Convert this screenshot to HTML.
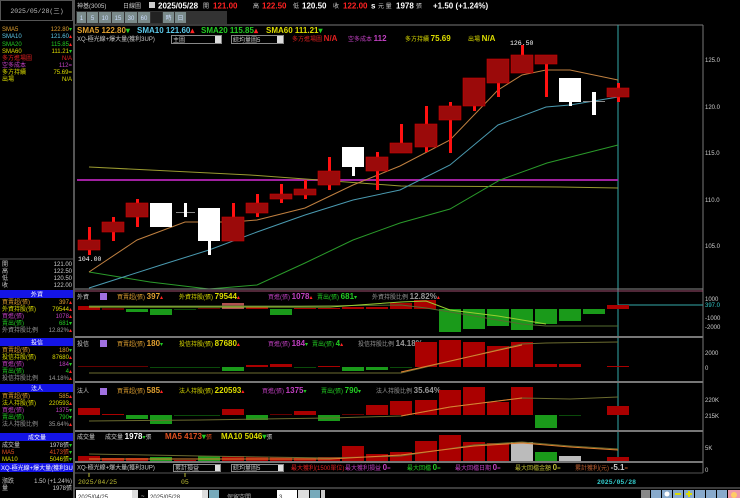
<!DOCTYPE html>
<html><head><meta charset="utf-8"><style>
html,body{margin:0;padding:0;background:#000;width:740px;height:498px;overflow:hidden}
svg{display:block}
text{font-family:"Liberation Sans","Noto Sans CJK TC",sans-serif;font-size:6px}
.b{font-weight:bold;font-size:8px}
.m{font-family:"Liberation Mono","Noto Sans CJK TC",monospace;font-size:6.5px}
</style></head><body>
<svg width="740" height="498" viewBox="0 0 740 498" xmlns="http://www.w3.org/2000/svg">
<rect width="740" height="498" fill="#000"/>
<rect x="0.5" y="0.5" width="72" height="20" fill="#000" stroke="#555"/>
<text x="37" y="13" fill="#bbb" text-anchor="middle" class="m" font-size="6.5">2025/05/28(三)</text>
<line x1="74" y1="0" x2="74" y2="498" stroke="#555" stroke-width="2"/>
<g class="m">
<text x="2" y="31" fill="#e0a030">SMA5</text><text x="72" y="31" fill="#e0a030" text-anchor="end">122.80<tspan fill="#2c2">▾</tspan></text>
<text x="2" y="38" fill="#5cc8e8">SMA10</text><text x="72" y="38" fill="#5cc8e8" text-anchor="end">121.60<tspan fill="#f22">▴</tspan></text>
<text x="2" y="46" fill="#2c2">SMA20</text><text x="72" y="46" fill="#2c2" text-anchor="end">115.85<tspan fill="#f22">▴</tspan></text>
<text x="2" y="53" fill="#dd0">SMA60</text><text x="72" y="53" fill="#dd0" text-anchor="end">111.21<tspan fill="#2c2">▾</tspan></text>
<text x="2" y="60" fill="#e02020">多方進場圖</text><text x="72" y="60" fill="#e02020" text-anchor="end">N/A</text>
<text x="2" y="67" fill="#c040c0">空多成本</text><text x="72" y="67" fill="#c040c0" text-anchor="end">112=</text>
<text x="2" y="74" fill="#dd0">多方持續</text><text x="72" y="74" fill="#dd0" text-anchor="end">75.69=</text>
<text x="2" y="81" fill="#dd0">出場</text><text x="72" y="81" fill="#dd0" text-anchor="end">N/A</text>
</g>
<line x1="0" y1="259" x2="74" y2="259" stroke="#555"/>
<g class="m" fill="#ccc">
<text x="2" y="266">開</text><text x="72" y="266" text-anchor="end">121.00</text>
<text x="2" y="273">高</text><text x="72" y="273" text-anchor="end">122.50</text>
<text x="2" y="280">低</text><text x="72" y="280" text-anchor="end">120.50</text>
<text x="2" y="287">收</text><text x="72" y="287" text-anchor="end">122.00</text>
</g>
<g class="m">
<rect x="0" y="290" width="73" height="8" fill="#1414e6"/><text x="37" y="296.5" fill="#fff" text-anchor="middle">外資</text>
<text x="2" y="304" fill="#e0a030">買賣超(張)</text><text x="72" y="304" fill="#e0a030" text-anchor="end">397<tspan fill="#f22">▴</tspan></text>
<text x="2" y="311" fill="#dd0">外資持股(張)</text><text x="72" y="311" fill="#dd0" text-anchor="end">79544<tspan fill="#f22">▴</tspan></text>
<text x="2" y="318" fill="#c040c0">買進(張)</text><text x="72" y="318" fill="#c040c0" text-anchor="end">1078<tspan fill="#f22">▴</tspan></text>
<text x="2" y="325" fill="#2c2">賣出(張)</text><text x="72" y="325" fill="#2c2" text-anchor="end">681▾</text>
<text x="2" y="332" fill="#999">外資持股比例</text><text x="72" y="332" fill="#999" text-anchor="end">12.82%<tspan fill="#f22">▴</tspan></text>
<rect x="0" y="338" width="73" height="8" fill="#1414e6"/><text x="37" y="344.5" fill="#fff" text-anchor="middle">投信</text>
<text x="2" y="352" fill="#e0a030">買賣超(張)</text><text x="72" y="352" fill="#e0a030" text-anchor="end">180<tspan fill="#2c2">▾</tspan></text>
<text x="2" y="359" fill="#dd0">投信持股(張)</text><text x="72" y="359" fill="#dd0" text-anchor="end">87680<tspan fill="#f22">▴</tspan></text>
<text x="2" y="366" fill="#c040c0">買進(張)</text><text x="72" y="366" fill="#c040c0" text-anchor="end">184<tspan fill="#2c2">▾</tspan></text>
<text x="2" y="373" fill="#2c2">賣出(張)</text><text x="72" y="373" fill="#2c2" text-anchor="end">4<tspan fill="#f22">▴</tspan></text>
<text x="2" y="380" fill="#999">投信持股比例</text><text x="72" y="380" fill="#999" text-anchor="end">14.18%<tspan fill="#f22">▴</tspan></text>
<rect x="0" y="384" width="73" height="8" fill="#1414e6"/><text x="37" y="390.5" fill="#fff" text-anchor="middle">法人</text>
<text x="2" y="398" fill="#e0a030">買賣超(張)</text><text x="72" y="398" fill="#e0a030" text-anchor="end">585<tspan fill="#f22">▴</tspan></text>
<text x="2" y="405" fill="#dd0">法人持股(張)</text><text x="72" y="405" fill="#dd0" text-anchor="end">220593<tspan fill="#f22">▴</tspan></text>
<text x="2" y="412" fill="#c040c0">買進(張)</text><text x="72" y="412" fill="#c040c0" text-anchor="end">1375<tspan fill="#2c2">▾</tspan></text>
<text x="2" y="419" fill="#2c2">賣出(張)</text><text x="72" y="419" fill="#2c2" text-anchor="end">790▾</text>
<text x="2" y="426" fill="#999">法人持股比例</text><text x="72" y="426" fill="#999" text-anchor="end">35.64%<tspan fill="#f22">▴</tspan></text>
<rect x="0" y="433" width="73" height="8" fill="#1414e6"/><text x="37" y="439.5" fill="#fff" text-anchor="middle">成交量</text>
<text x="2" y="447" fill="#ccc">成交量</text><text x="72" y="447" fill="#ccc" text-anchor="end">1978張<tspan fill="#2c2">▾</tspan></text>
<text x="2" y="454" fill="#e05020">MA5</text><text x="72" y="454" fill="#e05020" text-anchor="end">4173張<tspan fill="#2c2">▾</tspan></text>
<text x="2" y="461" fill="#dd0">MA10</text><text x="72" y="461" fill="#dd0" text-anchor="end">5046張<tspan fill="#2c2">▾</tspan></text>
<rect x="0" y="463" width="73" height="9" fill="#1414e6"/><text x="1" y="470" fill="#fff">XQ-極光線+爆大量(獲利3U</text>
<text x="2" y="483" fill="#ccc">漲跌</text><text x="72" y="483" fill="#ccc" text-anchor="end">1.50 (+1.24%)</text>
<text x="2" y="490" fill="#ccc">量</text><text x="72" y="490" fill="#ccc" text-anchor="end">1978張</text>
</g>

<text x="77" y="8" fill="#ccc">神基(3005)</text>
<text x="123" y="8" fill="#ccc">日線圖</text>
<rect x="149" y="2" width="6" height="6" fill="#ccc"/>
<text x="158" y="8.5" fill="#fff" class="b" font-size="8.5">2025/05/28</text>
<text x="203" y="8" fill="#ccc">開</text><text x="213" y="8.5" fill="#f22" class="b">121.00</text>
<text x="253" y="8" fill="#ccc">高</text><text x="262" y="8.5" fill="#f22" class="b">122.50</text>
<text x="293" y="8" fill="#ccc">低</text><text x="302" y="8.5" fill="#fff" class="b">120.50</text>
<text x="333" y="8" fill="#ccc">收</text><text x="343" y="8.5" fill="#f22" class="b">122.00</text>
<text x="371" y="8.5" fill="#fff" class="b">s</text><text x="378" y="8" fill="#ccc">元  量</text>
<text x="396" y="8.5" fill="#fff" class="b">1978</text><text x="416" y="8" fill="#ccc">張</text>
<text x="433" y="8.5" fill="#fff" class="b">+1.50 (+1.24%)</text>
<g font-size="6.5">
<rect x="76" y="11" width="151" height="13" fill="#333"/>
<rect x="77" y="12" width="9" height="11" fill="#7a8a8a"/><text x="81.5" y="20" text-anchor="middle" fill="#cdf" font-size="7">1</text>
<rect x="87" y="12" width="11" height="11" fill="#7a8a8a"/><text x="92.5" y="20" text-anchor="middle" fill="#cdf" font-size="7">5</text>
<rect x="99" y="12" width="12" height="11" fill="#7a8a8a"/><text x="105" y="20" text-anchor="middle" fill="#cdf" font-size="7">10</text>
<rect x="112" y="12" width="12" height="11" fill="#7a8a8a"/><text x="118" y="20" text-anchor="middle" fill="#cdf" font-size="7">15</text>
<rect x="125" y="12" width="12" height="11" fill="#7a8a8a"/><text x="131" y="20" text-anchor="middle" fill="#cdf" font-size="7">30</text>
<rect x="138" y="12" width="12" height="11" fill="#7a8a8a"/><text x="144" y="20" text-anchor="middle" fill="#cdf" font-size="7">60</text>
<rect x="151" y="12" width="11" height="11" fill="#222"/>
<rect x="163" y="12" width="11" height="11" fill="#7a8a8a"/><text x="168.5" y="20" text-anchor="middle" fill="#cdf">時</text>
<rect x="175" y="12" width="11" height="11" fill="#7a8a8a"/><text x="180.5" y="20" text-anchor="middle" fill="#cdf">日</text>
</g>
<line x1="75" y1="25" x2="703" y2="25" stroke="#777"/>
<text x="77" y="33" fill="#e0a030" class="b">SMA5 122.80<tspan fill="#2c2">▾</tspan></text>
<text x="137" y="33" fill="#5cc8e8" class="b">SMA10 121.60<tspan fill="#f22">▴</tspan></text>
<text x="201" y="33" fill="#2c2" class="b">SMA20 115.85<tspan fill="#f22">▴</tspan></text>
<text x="266" y="33" fill="#dd0" class="b">SMA60 111.21<tspan fill="#2c2">▾</tspan></text>
<text x="77" y="41" fill="#ccc">XQ-極光線+爆大量(獲利3UP)</text>
<rect x="171.5" y="35.5" width="50" height="8" fill="#000" stroke="#888"/><text x="173" y="42" fill="#ccc" font-size="5.5">主圖</text><rect x="215" y="36" width="6" height="7" fill="#ddd"/>
<rect x="231.5" y="35.5" width="52" height="8" fill="#000" stroke="#888"/><text x="233" y="42" fill="#ccc" font-size="5.5">綜均量圖5</text><rect x="277" y="36" width="6" height="7" fill="#ddd"/>
<text x="292" y="41" fill="#e02020">多方進場圖 <tspan class="b" font-size="7">N/A</tspan></text>
<text x="348" y="41" fill="#c040c0">空多成本 <tspan class="b" font-size="7">112</tspan></text>
<text x="405" y="41" fill="#dd0">多方持續 <tspan class="b" font-size="7">75.69</tspan></text>
<text x="468" y="41" fill="#dd0">出場 <tspan class="b" font-size="7">N/A</tspan></text>

<line x1="703" y1="25" x2="703" y2="473" stroke="#777"/>
<line x1="618" y1="25" x2="618" y2="462" stroke="#3aa"/>
<g fill="#ccc" class="m">
<text x="705" y="62">125.0</text><text x="705" y="109">120.0</text><text x="705" y="155">115.0</text><text x="705" y="202">110.0</text><text x="705" y="248">105.0</text>
<text x="705" y="301">1000</text><text x="705" y="307" fill="#3cc">397.0</text><text x="705" y="320">-1000</text><text x="705" y="329">-2000</text>
<text x="705" y="355">2000</text><text x="705" y="370">0</text>
<text x="705" y="402">220K</text><text x="705" y="418">215K</text>
<text x="705" y="450">5K</text><text x="705" y="472">0</text>
</g>
<line x1="77" y1="180" x2="618" y2="180" stroke="#a020a0" stroke-width="2"/>
<polyline fill="none" stroke="#9a9a30" points="89,167 250,175 401,186 560,187 618,188"/>
<polyline fill="none" stroke="#2a9a2a" points="89,272 150,282 209,289 257,285 305,263 353,240 400,223 450,209 500,180 547,163 618,145"/>
<polyline fill="none" stroke="#4a9ab0" points="89,288 161,265 209,250 257,232 305,215 353,200 400,190 450,165 498,125 546,107 570,105 618,97"/>
<polyline fill="none" stroke="#c08040" points="89,272 137,240 185,222 233,222 257,220 305,208 353,185 400,166 450,140 498,90 522,75 546,70 570,70 618,80"/>
<g fill="#f11">
<rect x="88" y="227" width="3" height="28"/><rect x="112" y="217" width="3" height="24"/><rect x="136" y="199" width="3" height="28"/>
<rect x="232" y="203" width="3" height="38"/><rect x="256" y="194" width="3" height="23"/><rect x="280" y="184" width="3" height="19"/>
<rect x="304" y="180" width="3" height="19"/><rect x="328" y="157" width="3" height="33"/><rect x="376" y="152" width="3" height="38"/>
<rect x="400" y="124" width="3" height="29"/><rect x="425" y="106" width="3" height="46"/><rect x="449" y="102" width="3" height="51"/>
<rect x="473" y="78" width="3" height="33"/><rect x="497" y="59" width="3" height="38"/><rect x="521" y="45" width="3" height="20"/>
<rect x="545" y="55" width="3" height="42"/><rect x="617" y="83" width="3" height="19"/>
</g>
<g fill="#9b0a0a" stroke="#c00" stroke-width="0.6">
<rect x="78" y="240" width="22" height="10"/><rect x="102" y="222" width="22" height="10"/><rect x="126" y="203" width="22" height="14"/>
<rect x="222" y="217" width="22" height="24"/><rect x="246" y="203" width="22" height="10"/><rect x="270" y="194" width="22" height="5"/>
<rect x="294" y="189" width="22" height="6"/><rect x="318" y="171" width="22" height="14"/><rect x="366" y="157" width="22" height="14"/>
<rect x="390" y="143" width="22" height="10"/><rect x="415" y="124" width="22" height="23"/><rect x="439" y="106" width="22" height="14"/>
<rect x="463" y="78" width="22" height="28"/><rect x="487" y="59" width="22" height="24"/><rect x="511" y="55" width="22" height="18"/>
<rect x="535" y="55" width="22" height="9"/><rect x="607" y="88" width="22" height="9"/>
</g>
<g fill="#fff">
<rect x="150" y="203" width="22" height="24"/>
<rect x="176" y="212" width="19" height="1" fill="#888"/><rect x="184" y="203" width="3" height="14"/>
<rect x="198" y="208" width="22" height="33"/><rect x="208" y="241" width="3" height="14"/>
<rect x="342" y="147" width="22" height="20"/><rect x="352" y="167" width="3" height="9"/>
<rect x="559" y="78" width="22" height="24"/><rect x="569" y="102" width="3" height="4"/>
<rect x="583" y="101" width="22" height="1" fill="#888"/><rect x="592" y="92" width="4" height="23"/>
</g>
<text x="510" y="45" fill="#fff" class="m">126.50</text>
<text x="78" y="261" fill="#fff" class="m">104.00</text>
<line x1="75" y1="289" x2="703" y2="289" stroke="#888"/>
<line x1="75" y1="291" x2="703" y2="291" stroke="#a05070"/>

<rect x="100" y="293" width="7" height="7" fill="#a070e0"/>
<text x="77" y="299" fill="#ccc">外資</text>
<text x="117" y="299" fill="#e0a030">買賣超(張) <tspan class="b" font-size="7.5">397</tspan><tspan fill="#f22">▴</tspan></text>
<text x="179" y="299" fill="#dd0">外資持股(張) <tspan class="b" font-size="7.5">79544</tspan><tspan fill="#f22">▴</tspan></text>
<text x="268" y="299" fill="#c040c0">買進(張) <tspan class="b" font-size="7.5">1078</tspan><tspan fill="#f22">▴</tspan></text>
<text x="317" y="299" fill="#2c2">賣出(張) <tspan class="b" font-size="7.5">681</tspan>▾</text>
<text x="372" y="299" fill="#999">外資持股比例 <tspan class="b" font-size="7.5">12.82%</tspan><tspan fill="#f22">▴</tspan></text>
<line x1="618" y1="305" x2="703" y2="305" stroke="#3aa"/>
<g>
<rect x="78" y="306" width="22" height="4" fill="#a00"/><rect x="102" y="308" width="22" height="2" fill="#600"/>
<rect x="126" y="309" width="22" height="3" fill="#1a9a1a"/><rect x="150" y="309" width="22" height="6" fill="#1a9a1a"/>
<rect x="174" y="309" width="22" height="1" fill="#0a4a0a"/><rect x="198" y="308" width="22" height="1" fill="#600"/>
<rect x="222" y="303" width="22" height="6" fill="#b05050"/><rect x="246" y="306" width="22" height="3" fill="#a00"/>
<rect x="270" y="309" width="22" height="6" fill="#1a9a1a"/><rect x="294" y="308" width="22" height="1" fill="#a00"/>
<rect x="318" y="308" width="22" height="1" fill="#a00"/><rect x="342" y="307" width="22" height="2" fill="#a00"/>
<rect x="366" y="307" width="22" height="2" fill="#a00"/><rect x="390" y="303" width="22" height="6" fill="#a00"/>
<rect x="414" y="300" width="22" height="9" fill="#a00"/>
<rect x="439" y="309" width="22" height="23" fill="#1a9a1a"/><rect x="463" y="309" width="22" height="20" fill="#1a9a1a"/>
<rect x="487" y="309" width="22" height="17" fill="#1a9a1a"/><rect x="511" y="309" width="22" height="21" fill="#1a9a1a"/>
<rect x="535" y="309" width="22" height="15" fill="#1a9a1a"/><rect x="559" y="309" width="22" height="12" fill="#1a9a1a"/>
<rect x="583" y="309" width="22" height="5" fill="#1a9a1a"/><rect x="607" y="305" width="22" height="4" fill="#a00"/>
</g>
<polyline fill="none" stroke="#556b2f" points="89,306 300,306 401,305 426,308 474,316 522,324 546,326 618,326"/>
<polyline fill="none" stroke="#9acd32" points="89,307 330,307 401,302 426,301 450,310 498,316 546,324"/>
<line x1="75" y1="337" x2="703" y2="337" stroke="#777" stroke-width="2"/>

<rect x="100" y="340" width="7" height="7" fill="#a070e0"/>
<text x="77" y="346" fill="#ccc">投信</text>
<text x="117" y="346" fill="#e0a030">買賣超(張) <tspan class="b" font-size="7.5">180</tspan><tspan fill="#2c2">▾</tspan></text>
<text x="179" y="346" fill="#dd0">投信持股(張) <tspan class="b" font-size="7.5">87680</tspan><tspan fill="#f22">▴</tspan></text>
<text x="268" y="346" fill="#c040c0">買進(張) <tspan class="b" font-size="7.5">184</tspan><tspan fill="#2c2">▾</tspan></text>
<text x="312" y="346" fill="#2c2">賣出(張) <tspan class="b" font-size="7.5">4</tspan><tspan fill="#f22">▴</tspan></text>
<text x="358" y="346" fill="#999">投信持股比例 <tspan class="b" font-size="7.5">14.18%</tspan><tspan fill="#f22">▴</tspan></text>
<g>
<rect x="78" y="366" width="70" height="1" fill="#600"/><rect x="150" y="367" width="70" height="1" fill="#0a4a0a"/>
<rect x="222" y="367" width="22" height="4" fill="#1a9a1a"/><rect x="246" y="365" width="22" height="2" fill="#a00"/>
<rect x="270" y="364" width="22" height="3" fill="#a00"/><rect x="294" y="367" width="22" height="1" fill="#0a4a0a"/>
<rect x="318" y="366" width="22" height="1" fill="#a00"/><rect x="342" y="367" width="22" height="4" fill="#1a9a1a"/>
<rect x="366" y="367" width="22" height="3" fill="#1a9a1a"/><rect x="390" y="367" width="22" height="1" fill="#0a4a0a"/>
<rect x="415" y="342" width="22" height="25" fill="#a00"/><rect x="439" y="340" width="22" height="27" fill="#a00"/>
<rect x="463" y="342" width="22" height="25" fill="#a00"/><rect x="487" y="346" width="22" height="21" fill="#a00"/>
<rect x="511" y="342" width="22" height="25" fill="#a00"/><rect x="535" y="364" width="22" height="3" fill="#a00"/>
<rect x="559" y="364" width="22" height="3" fill="#a00"/><rect x="607" y="366" width="22" height="1" fill="#a00"/>
</g>
<polyline fill="none" stroke="#6b6b2f" points="89,373 401,373 522,344 546,343 618,342"/>
<polyline fill="none" stroke="#e08030" points="401,372 522,345"/>
<line x1="75" y1="382" x2="703" y2="382" stroke="#777" stroke-width="2"/>

<rect x="100" y="388" width="7" height="7" fill="#a070e0"/>
<text x="77" y="393" fill="#ccc">法人</text>
<text x="117" y="393" fill="#e0a030">買賣超(張) <tspan class="b" font-size="7.5">585</tspan><tspan fill="#f22">▴</tspan></text>
<text x="179" y="393" fill="#dd0">法人持股(張) <tspan class="b" font-size="7.5">220593</tspan><tspan fill="#f22">▴</tspan></text>
<text x="262" y="393" fill="#c040c0">買進(張) <tspan class="b" font-size="7.5">1375</tspan><tspan fill="#2c2">▾</tspan></text>
<text x="321" y="393" fill="#2c2">賣出(張) <tspan class="b" font-size="7.5">790</tspan>▾</text>
<text x="376" y="393" fill="#999">法人持股比例 <tspan class="b" font-size="7.5">35.64%</tspan><tspan fill="#f22">▴</tspan></text>
<g>
<rect x="78" y="408" width="22" height="7" fill="#a00"/><rect x="102" y="414" width="22" height="1" fill="#a00"/>
<rect x="126" y="415" width="22" height="4" fill="#1a9a1a"/><rect x="150" y="415" width="22" height="9" fill="#1a9a1a"/>
<rect x="174" y="415" width="46" height="1" fill="#0a4a0a"/><rect x="222" y="409" width="22" height="6" fill="#a00"/>
<rect x="246" y="415" width="22" height="5" fill="#1a9a1a"/><rect x="270" y="414" width="22" height="1" fill="#600"/>
<rect x="294" y="411" width="22" height="4" fill="#a00"/><rect x="318" y="415" width="22" height="6" fill="#1a9a1a"/>
<rect x="342" y="414" width="22" height="1" fill="#600"/><rect x="366" y="405" width="22" height="10" fill="#a00"/>
<rect x="390" y="401" width="22" height="14" fill="#a00"/><rect x="415" y="400" width="22" height="15" fill="#a00"/>
<rect x="439" y="390" width="22" height="25" fill="#a00"/><rect x="463" y="387" width="22" height="28" fill="#a00"/>
<rect x="487" y="402" width="22" height="13" fill="#a00"/><rect x="511" y="387" width="22" height="28" fill="#a00"/>
<rect x="535" y="415" width="22" height="13" fill="#1a9a1a"/><rect x="559" y="415" width="22" height="1" fill="#0a4a0a"/>
<rect x="607" y="406" width="22" height="9" fill="#a00"/>
</g>
<polyline fill="none" stroke="#6b6b2f" points="89,421 200,420 330,418 401,416 450,407 522,398 570,399 618,397"/>
<polyline fill="none" stroke="#e08030" points="401,416 450,407 522,398"/>
<line x1="75" y1="431" x2="703" y2="431" stroke="#777" stroke-width="2"/>

<text x="77" y="439" fill="#ccc">成交量</text>
<text x="105" y="439" fill="#ccc">成交量 <tspan class="b" font-size="7.5" fill="#fff">1978</tspan><tspan fill="#2c2">▾</tspan>張</text>
<text x="165" y="439" fill="#e05020" class="b" font-size="7.5">MA5 4173<tspan fill="#2c2">▾</tspan><tspan font-size="6" font-weight="normal">張</tspan></text>
<text x="221" y="439" fill="#dd0" class="b" font-size="7.5">MA10 5046<tspan fill="#2c2">▾</tspan><tspan font-size="6" font-weight="normal" fill="#ccc">張</tspan></text>
<g>
<rect x="78" y="456" width="22" height="7" fill="#a00"/><rect x="102" y="458" width="22" height="5" fill="#a00"/>
<rect x="126" y="458" width="22" height="5" fill="#a00"/><rect x="150" y="457" width="22" height="6" fill="#1a9a1a"/>
<rect x="174" y="460" width="22" height="3" fill="#a00"/><rect x="198" y="456" width="22" height="7" fill="#1a9a1a"/>
<rect x="222" y="456" width="22" height="7" fill="#a00"/><rect x="246" y="457" width="22" height="6" fill="#a00"/>
<rect x="270" y="457" width="22" height="6" fill="#a00"/><rect x="294" y="458" width="22" height="5" fill="#a00"/>
<rect x="318" y="457" width="22" height="6" fill="#a00"/><rect x="342" y="446" width="22" height="17" fill="#a00"/>
<rect x="366" y="454" width="22" height="9" fill="#a00"/><rect x="390" y="452" width="22" height="11" fill="#a00"/>
<rect x="415" y="441" width="22" height="22" fill="#a00"/><rect x="439" y="435" width="22" height="28" fill="#a00"/>
<rect x="463" y="442" width="22" height="21" fill="#a00"/><rect x="487" y="443" width="22" height="20" fill="#a00"/>
<rect x="511" y="442" width="22" height="21" fill="#bbb"/><rect x="535" y="452" width="22" height="11" fill="#1a9a1a"/>
<rect x="559" y="456" width="22" height="7" fill="#bbb"/><rect x="607" y="457" width="22" height="6" fill="#a00"/>
</g>
<polyline fill="none" stroke="#6b6b2f" points="89,454 200,456 330,458 401,456 474,445 522,442 570,446 618,449"/>
<polyline fill="none" stroke="#e08030" points="89,459 330,459 401,455 474,446 522,443 570,447 618,450"/>
<line x1="75" y1="462" x2="703" y2="462" stroke="#777" stroke-width="2"/>

<text x="77" y="469.5" fill="#ccc">XQ-極光線+爆大量(獲利3UP)</text>
<rect x="173.5" y="464.5" width="47" height="7" fill="#000" stroke="#888"/><text x="175" y="470" fill="#ccc" font-size="5.5">累計損益</text><rect x="215" y="465" width="5" height="6" fill="#ddd"/>
<rect x="231.5" y="464.5" width="52" height="7" fill="#000" stroke="#888"/><text x="233" y="470" fill="#ccc" font-size="5.5">綜均量圖5</text><rect x="278" y="465" width="5" height="6" fill="#ddd"/>
<text x="291" y="470" fill="#e02020" font-size="5.5">最大獲利(1500單位)</text>
<text x="345" y="470" fill="#c040c0" font-size="5.5">最大獲利損益 <tspan class="b" font-size="7">0</tspan>=</text>
<text x="407" y="470" fill="#2c2" font-size="5.5">最大回檔 <tspan class="b" font-size="7">0</tspan>=</text>
<text x="455" y="470" fill="#c040c0" font-size="5.5">最大回檔日期 <tspan class="b" font-size="7">0</tspan>=</text>
<text x="515" y="470" fill="#bb3" font-size="5.5">最大回檔金額 <tspan class="b" font-size="7">0</tspan>=</text>
<text x="575" y="470" fill="#c06030" font-size="5.5">累計獲利(元) <tspan class="b" font-size="7" fill="#ccc">-5.1</tspan>=</text>
<line x1="75" y1="473" x2="703" y2="473" stroke="#555"/>

<line x1="89" y1="473" x2="89" y2="477" stroke="#bb3"/>
<text x="78" y="484" fill="#bb3" class="m" font-size="7">2025/04/25</text>
<line x1="185" y1="473" x2="185" y2="477" stroke="#bb3"/>
<text x="181" y="484" fill="#bb3" class="m" font-size="7">05</text>
<text x="597" y="484" fill="#3cc" class="m" font-size="7" font-weight="bold">2025/05/28</text>

<line x1="75" y1="488" x2="740" y2="488" stroke="#777"/>
<rect x="76" y="490" width="62" height="8" fill="#fff"/><text x="78" y="499" fill="#333" font-size="10">2025/04/25</text><rect x="132" y="490" width="6" height="8" fill="#ddd"/>
<text x="141" y="498" fill="#ccc" font-size="9">~</text>
<rect x="148" y="490" width="60" height="8" fill="#fff"/><text x="150" y="499" fill="#333" font-size="10">2025/05/28</text><rect x="202" y="490" width="6" height="8" fill="#ddd"/>
<rect x="209" y="490" width="10" height="8" fill="#7ab"/>
<text x="227" y="499" fill="#aaa" font-size="12">保留空間</text>
<rect x="277" y="490" width="20" height="8" fill="#fff"/><text x="279" y="499" fill="#333" font-size="10">3</text>
<rect x="298" y="490" width="11" height="8" fill="#ddd"/><rect x="310" y="490" width="10" height="8" fill="#7ab"/><rect x="321" y="490" width="4" height="8" fill="#ccc"/>
<g>
<rect x="641" y="490" width="9" height="8" fill="#888"/>
<rect x="651" y="490" width="10" height="8" fill="#8ac"/>
<rect x="662" y="490" width="10" height="8" fill="#8ac"/><circle cx="667" cy="494" r="2.5" fill="#fff"/>
<rect x="673" y="490" width="10" height="8" fill="#8ac"/><rect x="675" y="493" width="6" height="2" fill="#dd0"/>
<rect x="684" y="490" width="10" height="8" fill="#8ac"/><rect x="686" y="493" width="6" height="2" fill="#dd0"/><rect x="688" y="491" width="2" height="6" fill="#dd0"/>
<rect x="695" y="490" width="10" height="8" fill="#8ac"/>
<rect x="706" y="490" width="10" height="8" fill="#8ac"/>
<rect x="717" y="490" width="10" height="8" fill="#8ac"/>
<rect x="728" y="490" width="12" height="8" fill="#e9a"/><circle cx="734" cy="495" r="3" fill="#fc6"/>
</g>
</svg>
</body></html>
